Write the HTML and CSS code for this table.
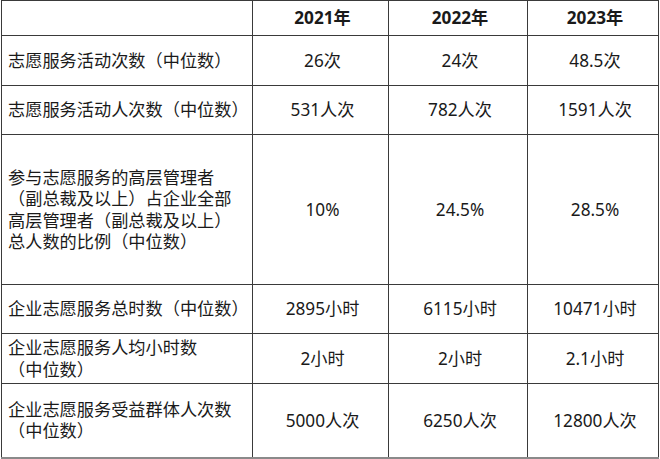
FILE: index.html
```html
<!DOCTYPE html>
<html lang="zh">
<head>
<meta charset="utf-8">
<link rel="stylesheet" href="styles.css">
</head>
<body>
<table class="data">
  <colgroup>
    <col class="c-label">
    <col class="c-y1">
    <col class="c-y2">
    <col class="c-y3">
  </colgroup>
  <thead>
    <tr class="r-head">
      <th class="label"></th>
      <th>2021年</th>
      <th>2022年</th>
      <th>2023年</th>
    </tr>
  </thead>
  <tbody>
    <tr class="r1">
      <td class="label">志愿服务活动次数（中位数）</td>
      <td>26次</td>
      <td>24次</td>
      <td>48.5次</td>
    </tr>
    <tr class="r2">
      <td class="label">志愿服务活动人次数（中位数）</td>
      <td>531人次</td>
      <td>782人次</td>
      <td>1591人次</td>
    </tr>
    <tr class="r3">
      <td class="label">参与志愿服务的高层管理者<br>（副总裁及以上）占企业全部<br>高层管理者（副总裁及以上）<br>总人数的比例（中位数）</td>
      <td>10%</td>
      <td>24.5%</td>
      <td>28.5%</td>
    </tr>
    <tr class="r4">
      <td class="label">企业志愿服务总时数（中位数）</td>
      <td>2895小时</td>
      <td>6115小时</td>
      <td>10471小时</td>
    </tr>
    <tr class="r5">
      <td class="label">企业志愿服务人均小时数<br>（中位数）</td>
      <td>2小时</td>
      <td>2小时</td>
      <td>2.1小时</td>
    </tr>
    <tr class="r6">
      <td class="label">企业志愿服务受益群体人次数<br>（中位数）</td>
      <td>5000人次</td>
      <td>6250人次</td>
      <td>12800人次</td>
    </tr>
  </tbody>
</table>
</body>
</html>
```

FILE: styles.css
```css
html, body {
  margin: 0;
  padding: 0;
  background: #ffffff;
}
body {
  padding: 0 0 0 1px;
  font-family: "Noto Sans", "Noto Sans CJK SC", sans-serif;
  color: #1a1a1a;
}
.data {
  border-collapse: collapse;
  table-layout: fixed;
  width: 657px;
  font-size: 17.2px;
  line-height: 21.5px;
  text-spacing-trim: space-all;
  font-feature-settings: "chws" 0, "halt" 0, "palt" 0;
}
.c-label { width: 251px; }
.c-y1 { width: 136px; }
.c-y2 { width: 139px; }
.c-y3 { width: 131px; }
.data th, .data td {
  border: 1px solid #3a3a3a;
  padding: 0 2px 0 6px;
  text-align: center;
  vertical-align: middle;
  box-sizing: border-box;
  white-space: nowrap;
}
.data th {
  font-weight: 700;
}
.data .label {
  text-align: left;
}
.data tbody tr:last-child td {
  border-bottom: 2px solid #8a8a8a;
}
.r-head { height: 35px; }
.r1 { height: 50px; }
.r2 { height: 49px; }
.r3 { height: 150px; }
.r4 { height: 49px; }
.r5 { height: 50px; }
.r6 { height: 74px; }
```
